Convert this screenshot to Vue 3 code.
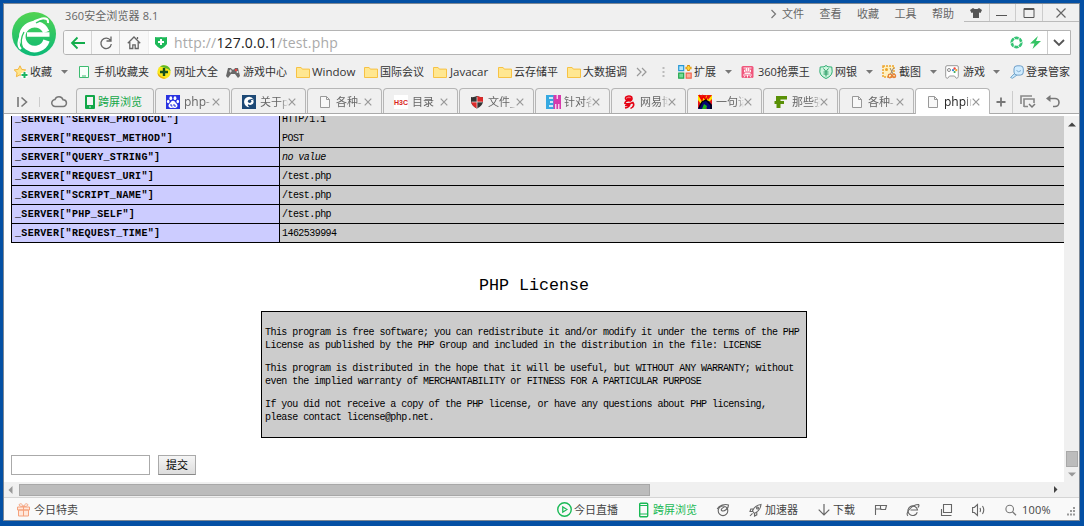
<script setup>
const folder = '<path d="M.5 2.5h4.6l1.2 1.6h7.2v8.4H.5z" fill="#ffe791" stroke="#f7c244"/>'
const page = '<path d="M2.5 1.5h6l3 3v8h-9z" fill="#f8f8f8" stroke="#999"/><path d="M8.5 1.5v3h3" fill="none" stroke="#999"/>'
const eGlyph = '<g fill="none" stroke="#666" stroke-width="1.1"><path d="M11.300 9.300a4.800 4.800 0 1 1 .2-2.300H4.500"/><path d="M2 12.800C-1.500 10.500 6 1.400 12.600 1.500c.8 1 .2 2-.8 3"/></g>'

const icons = {
  star: '<path d="M6 .8l1.7 3.6 4 .5-2.9 2.8.7 4L6 9.8l-3.6 1.9.7-4L.2 4.9l4-.5z" fill="#ffe58a" stroke="#f3b63c"/><path d="M10.5 6.5v7M7 10h7" stroke="#fff" stroke-width="4"/><path d="M10.5 7v6M7.5 10h6" stroke="#1bb464" stroke-width="2"/>',
  phoneBook: '<path d="M1.5 1.5h9v11h-9z" fill="#f7fffa" stroke="#3dbb70"/><path d="M4 11h4" stroke="#3dbb70"/>',
  plusBall: '<circle cx="7" cy="7" r="6.7" fill="#f9e81d"/><path d="M3 1.6A6.7 6.7 0 0 1 13.6 6L11 4 5 2z" fill="#5cb92a"/><path d="M.4 8A6.7 6.7 0 0 0 9 13.3L5 12z" fill="#e9a914"/><path d="M7 3v8M3 7h8" stroke="#14501c" stroke-width="2.4"/>',
  gamepad: '<path d="M2 3h3l1 1.5h2L9 3h3l2 8-2 2-3-4H5l-3 4-2-2z" fill="#686868"/><path d="M3 6h3M4.5 4.5v3" stroke="#ddd"/><circle cx="10" cy="5" r="1.2" fill="#e44"/><circle cx="11.5" cy="7" r="1" fill="#eee"/>',
  folder,
  blocks: '<path d="M.7.7h5v5h-5z" fill="#b5e5fb" stroke="#2799d5" stroke-width="1.2"/><path d="M.7 8.2h5v5h-5z" fill="#72dc97" stroke="#23a64d" stroke-width="1.2"/><path d="M8.2 8.2h5v5h-5z" fill="#fcae9e" stroke="#ef6850" stroke-width="1.2"/><path d="M10.5 0v6M7.5 3h6" stroke="#d98900" stroke-width="2.6"/><path d="M10.5 1v4M8.500 3h4" stroke="#ffd93c" stroke-width="1.300"/>',
  ticket: '<rect x=".5" y="1" width="12" height="12" rx="1.5" fill="#f0567c"/><path d="M2.5 3h8M3.5 5h6v2h-6zM5.5 3v3M7.5 3v3M3.5 8.5h6M2 10h9M6.5 10v2.5M4 11l-1 1.5M9 11l1 1.5" stroke="#fff" stroke-width=".9" fill="none"/>',
  bank: '<path d="M7 .5l2 1.3 3.8.2.4 4.8C13 10.300 9.500 12.500 7 13.500 4.500 12.500 1 10.300.8 6.800L1.200 2 5 1.800z" fill="#cff5df" stroke="#2fae72"/><path d="M4.500 3.500L7 6.500l2.500-3M7 6.500v5M4.500 7h5M4.500 9h5" fill="none" stroke="#269b62"/>',
  shot: '<path d="M1 1h11v11H1z" fill="#fff1bf" stroke="#eda42d" stroke-width="1.500" stroke-dasharray="2 1"/><circle cx="4.500" cy="4.500" r="1.500" fill="#eda42d"/><path d="M8 3l3 6M11.500 3l-3 6" stroke="#97806b"/><circle cx="8" cy="11" r="1.800" fill="none" stroke="#e6803c" stroke-width="1.300"/><circle cx="12" cy="11" r="1.600" fill="none" stroke="#e6803c" stroke-width="1.300"/>',
  games: '<path d="M.7 2q.2-1.300 1.300-1.300h10q1.300 0 1.300 1.300v9.500q-.2 1.800-2 1.800L9.500 11h-5l-1.800 2.300q-2 0-2-1.800z" fill="#fff" stroke="#999"/><circle cx="4" cy="5" r="1.500" fill="none" stroke="#888"/><circle cx="9.600" cy="3.500" r="1.200" fill="#ef4a40"/><circle cx="8" cy="5.200" r="1.100" fill="#3388e0"/><circle cx="11.300" cy="5.200" r="1.100" fill="#efa429"/><circle cx="9.600" cy="7" r="1.100" fill="#3baa59"/>',
  login: '<path d="M5 8l-4.500 4.500 2 .8L7 10" fill="#c6e6fa" stroke="#77a9ce"/><rect x="4" y=".8" width="9.300" height="9.300" rx="3" fill="#d0ecff" stroke="#6f9fc8"/><path d="M6.500 5.500q2 2.500 4.500 0" fill="none" stroke="#7fa9cd"/>',
  tabPhone: '<rect x="2" y="0" width="10" height="14" rx="1" fill="#12a748"/><path d="M4 2h6v8H4z" fill="#f4f4f4"/><path d="M6.200 11.500h1.600v1H6.200z" fill="#fff"/>',
  paw: '<path d="M0 0h14v14H0z" fill="#2932e1"/><g fill="#fff"><ellipse cx="4.800" cy="3.200" rx="1.400" ry="1.900"/><ellipse cx="9" cy="3.200" rx="1.400" ry="1.900"/><ellipse cx="2.200" cy="6.500" rx="1.300" ry="1.700"/><ellipse cx="11.800" cy="6.500" rx="1.300" ry="1.700"/><path d="M7 5.800c2 0 2.300 2.200 4 3.400 1.500 2.300-.5 4.300-4 3.600-3.500.7-5.500-1.300-4-3.600 1.700-1.200 2-3.400 4-3.400z"/></g><path d="M5 9v2h1.500M8 9v2h2" stroke="#2932e1" fill="none"/>',
  swirl: '<path d="M0 0h14v14H0z" fill="#1d4976"/><path d="M12 4.500Q9 .8 5 2.200 1.500 4 2.200 8q1 4 5.300 4.300-2.500-1.300-1.500-3 3 1.500 5-.5 1.200-2 .2-4z" fill="#fff"/><circle cx="7.600" cy="6.300" r="1.700" fill="#1d4976"/><path d="M8 5l5-1.500" stroke="#1d4976"/>',
  page,
  shield: '<path d="M1 2q3 .5 6-1 3 1.500 6 1v5q-1 4-6 6.500Q2 11 1 7z" fill="#333"/><path d="M7 1q3 1.500 6 1v5H7zM1.200 7H7v6.500Q2 11 1.200 7z" fill="#dc2929"/><path d="M1.500 7h11M7 2v11" stroke="#eee" stroke-width=".7"/>',
  em: '<path d="M0 0h8v14H0z" fill="#36a9e1"/><path d="M7.500 0H15v14H7.500z" fill="#d83aac"/><path d="M3 3h4M4 7h3M3 11h4" fill="none" stroke="#fff" stroke-width="1.500"/><path d="M9.800 14V9M11.200 0v4M12.800 14V9" fill="none" stroke="#fff" stroke-width="1.100"/>',
  netease: '<g fill="none" stroke="#e50012" stroke-width="1.500"><path d="M9.500 4.800H4.200q-1.700-1.600.2-3.200 3-1.400 5.200.3 1.300 3-1.200 4.100-4.900-.9-5.500 2.200 3.400 1.500 8-.7 2 2.500-.6 4.700M3 10.500q3 .5 4.700-2M3 13q4.300-.7 5-4M11.500 11.500l-3 2"/><path d="M4.500 3.200h5"/></g>',
  flame: '<path d="M0 0h14v14H0z" fill="#e91616"/><path d="M0 0l4 4V0l3 4 2-4 1 5 4-5v4l-4 4-7 1-3-4z" fill="#ffe500"/><path d="M1 0l3 5 1-4 3 4 2-4" fill="none" stroke="#e00" stroke-width="1.500"/><path d="M0 14l2-5 5-4 4 1 3 4v4H9l-2-4-2 4z" fill="#050572"/><path d="M4 14l2-5 3 2-1 3z" fill="#1fb51f"/><path d="M1 13l3-6 4-2 5 5v4" fill="none" stroke="#000" stroke-width="1.300"/>',
  freebuf: '<path d="M2 1H13v3.500H6.500V6H10v3H6.500v4H2.500V9H.5V6H2z" fill="#599006"/>',
  gift: '<path d="M.5 4h12v3h-12zM1.500 7h10v6h-10z" fill="#ffe8dc" stroke="#f5a27d"/><path d="M6.500 4v9M6.500 3.500C5 0 2 .2 2.200 2.200Q2.800 3.500 6.500 3.500C8 0 11 .2 10.800 2.200Q10.200 3.500 6.500 3.500" fill="none" stroke="#f5a27d"/>',
  play: '<circle cx="7" cy="7" r="6.300" fill="none" stroke="#19b955" stroke-width="1.300"/><path d="M5.400 4.500v5L9.200 7z" fill="none" stroke="#19b955" stroke-width="1.200"/>',
  phone: '<rect x=".7" y=".2" width="8" height="13.500" rx="1" fill="none" stroke="#19b955" stroke-width="1.400"/><path d="M1 2.500h7.500M1 11h7.500" stroke="#19b955"/>',
  orbit: '<g fill="none" stroke="#666" stroke-width="1.100"><circle cx="7" cy="7.800" r="4.800"/><path d="M1.200 6C3 2.500 9 .5 12.500 2 12.500 6 8 9 5.500 7.500 4.500 6 7 4.500 8.500 4"/></g>',
  rocket: '<g fill="none" stroke="#666" stroke-width="1.100"><path d="M3.500 8Q5.500 2.500 12 1.500q-.5 6-6.500 9zM4 6H1.800L1 8.500h2.500M7.800 9.300v2.500L5.500 13v-2.500M1 13l2.500-2.700"/><circle cx="8.500" cy="5" r="1"/></g>',
  down: '<path d="M6 1v11M.7 6.700L6 12l5.300-5.300" fill="none" stroke="#666" stroke-width="1.200"/>',
  flag: '<path d="M1.500 12V2.500h11L11.500 6.500H7V6H1.500M6.500 2.500V6" fill="none" stroke="#666" stroke-width="1.100"/>',
  ie: eGlyph,
  windows: '<path d="M3.500 1.500h8v8h-8zM1.500 6v6.500h10" fill="none" stroke="#666" stroke-width="1.100"/>',
  speaker: '<path d="M.6 4.500h1.700L5.500 1.500v11L2.300 9.500H.6zM8 5q1 2 0 4M10.500 3q2.500 4 0 8" fill="none" stroke="#666" stroke-width="1.100"/>',
  lens: '<circle cx="4.700" cy="6" r="3.800" fill="none" stroke="#777" stroke-width="1.100"/><path d="M7.500 8.800l3.500 3.500" stroke="#777" stroke-width="1.300"/>',
}

// x = left edge of the item, gap = distance from the icon's left edge to its label
const place = (list, end) => list.map((it, i) => ({ ...it, w: (list[i + 1]?.x ?? end) - it.x }))

const bookmarks = place([
  { x: 14, icon: 'star', label: '收藏', gap: 16 },
  { x: 61, caret: true },
  { x: 78, icon: 'phoneBook', label: '手机收藏夹', gap: 16 },
  { x: 157, icon: 'plusBall', label: '网址大全', gap: 17 },
  { x: 226, icon: 'gamepad', label: '游戏中心', gap: 17 },
  { x: 296, icon: 'folder', label: 'Window', gap: 16, latin: true },
  { x: 364, icon: 'folder', label: '国际会议', gap: 16 },
  { x: 433, icon: 'folder', label: 'Javacar', gap: 17, latin: true },
  { x: 498, icon: 'folder', label: '云存储平', gap: 16 },
  { x: 567, icon: 'folder', label: '大数据调', gap: 16 },
  { x: 636, more: true },
  { x: 662, dots: true },
  { x: 678, icon: 'blocks', label: '扩展', gap: 16 },
  { x: 725, caret: true },
  { x: 741, icon: 'ticket', label: '360抢票王', gap: 17 },
  { x: 819, icon: 'bank', label: '网银', gap: 16 },
  { x: 866, caret: true },
  { x: 882, icon: 'shot', label: '截图', gap: 17 },
  { x: 930, caret: true },
  { x: 945, icon: 'games', label: '游戏', gap: 18 },
  { x: 993, caret: true },
  { x: 1010, icon: 'login', label: '登录管家', gap: 16 },
], 1079)

const tabs = [
  { icon: 'paw', label: 'php-', latin: true },
  { icon: 'swirl', label: '关于p' },
  { icon: 'page', label: '各种-' },
  { h3c: true, label: '目录' },
  { icon: 'shield', label: '文件_' },
  { icon: 'em', label: '针对各' },
  { icon: 'netease', label: '网易博' },
  { icon: 'flame', label: '一句话' },
  { icon: 'freebuf', label: '那些强' },
  { icon: 'page', label: '各种-' },
  { icon: 'page', label: 'phpin', latin: true, active: true },
]

const rows = [
  ['SERVER_PROTOCOL', 'HTTP/1.1'],
  ['REQUEST_METHOD', 'POST'],
  ['QUERY_STRING', 'no value'],
  ['REQUEST_URI', '/test.php'],
  ['SCRIPT_NAME', '/test.php'],
  ['PHP_SELF', '/test.php'],
  ['REQUEST_TIME', '1462539994'],
]

const status = place([
  { x: 17, icon: 'gift', label: '今日特卖', gap: 17 },
  { x: 557, icon: 'play', label: '今日直播', gap: 17, wide: true },
  { x: 639, icon: 'phone', label: '跨屏浏览', gap: 14, green: true },
  { x: 716, icon: 'orbit' },
  { x: 749, icon: 'rocket', label: '加速器', gap: 16 },
  { x: 818, icon: 'down', label: '下载', gap: 15 },
  { x: 874, icon: 'flag' },
  { x: 906, icon: 'ie' },
  { x: 940, icon: 'windows' },
  { x: 972, icon: 'speaker' },
  { x: 1005, icon: 'lens', label: '100%', gap: 17, latin: true },
], 1064)
</script>

<template>
  <div class="desktop">
    <div class="window">
      <div class="head">
        <svg class="logo" width="44" height="44" viewBox="0 0 44 44">
          <defs>
            <linearGradient id="lg" x1="0" y1="0" x2="0" y2="1">
              <stop offset="0" stop-color="#51d351" /><stop offset="1" stop-color="#0bb978" />
            </linearGradient>
          </defs>
          <circle cx="22" cy="22" r="22" fill="url(#lg)" />
          <path d="M34.500 28.500A12.400 12.400 0 1 1 34.200 20" fill="none" stroke="#fff" stroke-width="6.500" />
          <path d="M15 22.500H37.500" stroke="#fff" stroke-width="4.500" />
          <path d="M9 37Q3.500 32 10.500 20.500 18 9.500 30 6.500q7-1 6 4.500" fill="none" stroke="#fff" stroke-width="2.200" />
          <path d="M10.500 35.500Q7.500 28 12 20" fill="none" stroke="#29c562" stroke-width="1.300" />
          <path d="M24 11Q28 8.500 32 8.500" fill="none" stroke="#29c562" stroke-width="1.300" />
        </svg>
        <div class="headmain">
          <div class="titlebar">
            <span class="title">360安全浏览器 8.1</span>
            <svg class="chev" width="8" height="12" viewBox="0 0 8 12"><path d="M1.500 2l4 4-4 4" fill="none" stroke="#777" stroke-width="1.200" /></svg>
            <span v-for="m in ['文件', '查看', '收藏', '工具', '帮助']" :key="m" class="menu">{{ m }}</span>
            <div class="winbtns">
              <i><svg width="12" height="12" viewBox="0 0 12 12"><path d="M3 1l1.500 1h3L9 1l3 2-1.500 3L9 5.500V11H3V5.500L1.500 6 0 3z" fill="#555" /></svg></i>
              <i><svg width="12" height="12" viewBox="0 0 12 12"><path d="M0 8.500h11" stroke="#555" /></svg></i>
              <i><svg width="12" height="12" viewBox="0 0 12 12"><path d="M1 1.500h10v9H1zM1 2.500h10" fill="none" stroke="#555" /></svg></i>
              <i><svg width="12" height="12" viewBox="0 0 12 12"><path d="M1.500 1.500l9 9M10.500 1.500l-9 9" stroke="#666" stroke-width="1.200" /></svg></i>
            </div>
          </div>
          <div class="address">
            <i class="nav"><svg width="16" height="14" viewBox="0 0 16 14"><path d="M1.500 7H15M7.500 1.500L2 7l5.500 5.500" fill="none" stroke="#12ad4c" stroke-width="1.800" /></svg></i>
            <i class="nav"><svg width="14" height="14" viewBox="0 0 14 14"><path d="M11.500 4.500A5.200 5.200 0 1 0 12.300 8M12 .5v4.500H7.500" fill="none" stroke="#666" stroke-width="1.300" /></svg></i>
            <i class="nav"><svg width="14" height="14" viewBox="0 0 14 14"><path d="M.8 7.200L7 1l6.200 6.200M2.800 6v6.500h3V8.800h2.400v3.700h3V6M10.500 3V1" fill="none" stroke="#666" stroke-width="1.300" /></svg></i>
            <svg class="safe" width="12" height="13" viewBox="0 0 12 13"><path d="M0 1q3 .6 6 0 3 .6 6 0v7Q10 11 6 13 2 11 0 8z" fill="#20b95a" /><path d="M6 3v6M3 6h6" stroke="#fff" stroke-width="2" /></svg>
            <span class="url">http://<b>127.0.0.1</b>/test.php</span>
            <svg class="aperture" width="13" height="13" viewBox="0 0 13 13"><circle cx="6.500" cy="6.500" r="4.700" fill="none" stroke="#35c374" stroke-width="2.800" /><path d="M3 .5l2.500 3.800M9.500 .8L8.300 5M12.800 5.500L9 7.500M10 12.500L7.500 8.800M3.500 12.300L4.700 8M.3 7.500L4 5.500" stroke="#fff" stroke-width=".9" /></svg>
            <svg class="bolt" width="11" height="13" viewBox="0 0 11 13"><path d="M8 0L0 7.500h4.500L2.500 13 11 5H6z" fill="#35c364" /></svg>
            <i class="drop"><svg width="12" height="8" viewBox="0 0 12 8"><path d="M1 1l5 5 5-5" fill="none" stroke="#555" stroke-width="1.800" /></svg></i>
          </div>
        </div>
      </div>

      <div class="bookmarks">
        <div v-for="b in bookmarks" :key="b.x" class="slot" :style="{ width: b.w + 'px' }">
          <svg v-if="b.caret" width="8" height="14" viewBox="0 0 8 14"><path d="M0 5h7L3.500 8.800z" fill="#777" /></svg>
          <svg v-else-if="b.more" width="12" height="14" viewBox="0 0 12 14"><path d="M1 3l4 4-4 4M6 3l4 4-4 4" fill="none" stroke="#999" stroke-width="1.200" /></svg>
          <svg v-else-if="b.dots" width="3" height="14" viewBox="0 0 3 14"><path d="M1.500 2v11" stroke="#bbb" stroke-width="2" stroke-dasharray="2 2" /></svg>
          <template v-else>
            <span class="ico" :style="{ width: b.gap + 'px' }"><svg width="14" height="14" viewBox="0 0 14 14" v-html="icons[b.icon]"></svg></span>
            <span class="label" :class="{ latin: b.latin }">{{ b.label }}</span>
          </template>
        </div>
      </div>

      <div class="tabs">
        <div class="tools">
          <svg width="12" height="12" viewBox="0 0 12 12"><path d="M1 1v10M4.500 1.500L9.500 6l-5 4.500" fill="none" stroke="#777" stroke-width="1.600" /></svg>
          <span class="sep"></span>
          <svg width="16" height="13" viewBox="0 0 16 13"><path d="M4.500 11.500a3.500 3.500 0 0 1-.5-7 4.200 4.200 0 0 1 8 .3 3.300 3.300 0 0 1 .2 6.700z" fill="none" stroke="#777" stroke-width="1.500" /></svg>
        </div>
        <div class="tab first">
          <svg width="14" height="14" viewBox="0 0 14 14" v-html="icons.tabPhone"></svg>
          <span class="tlabel">跨屏浏览</span>
        </div>
        <div v-for="(t, i) in tabs" :key="i" class="tab" :class="{ active: t.active }">
          <span v-if="t.h3c" class="h3c">H3C</span>
          <svg v-else width="14" height="14" viewBox="0 0 14 14" v-html="icons[t.icon]"></svg>
          <span class="tlabel" :class="{ latin: t.latin }">{{ t.label }}</span>
          <svg class="x" width="8" height="8" viewBox="0 0 8 8"><path d="M.7.7l6.600 6.600M7.300.7L.7 7.300" stroke="#999" stroke-width="1.200" /></svg>
        </div>
        <div class="after">
          <svg width="10" height="10" viewBox="0 0 10 10"><path d="M5 .5v9M.5 5h9" stroke="#777" stroke-width="1.800" /></svg>
          <span class="bar"></span>
          <svg width="16" height="13" viewBox="0 0 16 13"><path d="M1 9V1h11M4 12V4h10v4M4 11.500h4" fill="none" stroke="#888" stroke-width="1.600" /><path d="M9 9l3 3 3-3" fill="none" stroke="#777" stroke-width="1.500" /></svg>
          <svg class="undo" width="14" height="13" viewBox="0 0 14 13"><path d="M2 3.500h7a4 4 0 0 1 0 8H7" fill="none" stroke="#777" stroke-width="1.600" /><path d="M0 3.500L4.500 0v7z" fill="#777" /></svg>
        </div>
      </div>

      <div class="viewport">
        <div class="page">
          <div class="info">
            <div v-for="(r, i) in rows" :key="r[0]" class="row" :class="{ open: i === 0 }">
              <div class="k">_SERVER["{{ r[0] }}"]</div>
              <div class="v" :class="{ none: r[1] === 'no value' }">{{ r[1] }}</div>
            </div>
          </div>
          <h2>PHP License</h2>
          <div class="license">
            <p>This program is free software; you can redistribute it and/or modify it under the terms of the PHP<br>License as published by the PHP Group and included in the distribution in the file: LICENSE</p>
            <p>This program is distributed in the hope that it will be useful, but WITHOUT ANY WARRANTY; without<br>even the implied warranty of MERCHANTABILITY or FITNESS FOR A PARTICULAR PURPOSE</p>
            <p>If you did not receive a copy of the PHP license, or have any questions about PHP licensing,<br>please contact license@php.net.</p>
          </div>
          <div class="form">
            <div class="field"></div>
            <div class="submit">提交</div>
          </div>
        </div>
        <div class="vbar">
          <svg width="8" height="5" viewBox="0 0 8 5"><path d="M0 4.500L4 .5l4 4z" fill="#444" /></svg>
          <div class="vthumb"></div>
          <svg width="8" height="5" viewBox="0 0 8 5"><path d="M0 .5h8l-4 4z" fill="#999" /></svg>
        </div>
      </div>
      <div class="hbar">
        <svg width="5" height="8" viewBox="0 0 5 8"><path d="M4.500 0v8L.5 4z" fill="#999" /></svg>
        <div class="hthumb"></div>
        <svg class="right" width="4" height="7" viewBox="0 0 4 7"><path d="M0 0v7l3.500-3.500z" fill="#444" /></svg>
      </div>
      <div class="status">
        <div v-for="s in status" :key="s.x" class="slot" :style="{ width: s.w + 'px' }">
          <span class="ico" :style="{ width: (s.gap || 14) + 'px' }"><svg :width="s.wide ? 15 : 14" :height="s.wide ? 15 : 14" viewBox="0 0 14 14" v-html="icons[s.icon]"></svg></span>
          <span v-if="s.label" class="label" :class="{ green: s.green, latin: s.latin }">{{ s.label }}</span>
        </div>
        <svg class="grip" width="10" height="10" viewBox="0 0 10 10"><path d="M7 1h2M4 4h2M7 4h2M1 7.500h2M4 7.500h2M7 7.500h2" stroke="#999" stroke-width="2" /></svg>
      </div>
    </div>
  </div>
</template>

<style>
body { margin: 0; background: #0450a4; }
</style>

<style scoped>
* { box-sizing: border-box; }
svg { display: block; flex: none; overflow: visible; }
i { font-style: normal; }
.desktop { width: 1084px; height: 526px; padding: 3px 4px 5px 3px; background: #0450a4; overflow: hidden; }
.window {
  width: 1077px; height: 518px; border: 1px solid #7d8894; background: #f0f0f0;
  display: flex; flex-direction: column; overflow: hidden;
  font: 11px/14px "Open Sans", "Noto Sans CJK SC", sans-serif; color: #333; white-space: nowrap;
}
.head { display: flex; height: 55px; flex: none; }
.logo { margin: 8px 0 0 8px; }
.headmain { margin-left: 7px; flex: 1; min-width: 0; }
.titlebar { height: 26px; display: flex; align-items: flex-start; }
.title { width: 702px; flex: none; padding: 5px 0 0 2px; color: #666; letter-spacing: .1px; }
.chev { margin: 4px 0 0 1px; width: 16px; }
.menu { width: 37.500px; flex: none; padding-top: 3px; color: #666; }
.winbtns { display: flex; flex: none; height: 18px; border-bottom: 1px solid #bbb; margin-left: -6px; width: 116px; }
.winbtns i { flex: none; width: 26.500px; display: flex; align-items: center; justify-content: center; border-right: 1px solid #ccc; }
.winbtns i:first-child { width: 26px; }
.winbtns i:last-child { flex: 1; border: 0; }
.address { height: 25px; width: 1008px; background: #fff; border: 1px solid #b4b4b4; border-radius: 3px 0 0 3px; display: flex; align-items: center; overflow: hidden; }
.nav { width: 28px; height: 23px; background: #f8f8f8; border-right: 1px solid #d4d4d4; display: flex; align-items: center; justify-content: center; }
.nav:nth-child(3) { border-color: #eee; width: 29px; }
.safe { margin-left: 6px; }
.url { margin-left: 7px; width: 836px; font-size: 14px; line-height: 22px; color: #aaa; letter-spacing: .19px; }
.url b { font-weight: 400; color: #222; }
.bolt { margin-left: 7px; }
.drop { margin-left: 6px; flex: 1; height: 23px; border-left: 1px solid #ccc; display: flex; align-items: center; justify-content: center; }
.bookmarks { height: 29px; flex: none; display: flex; align-items: center; padding: 0 0 3px 10px; }
.slot { display: flex; align-items: center; flex: none; }
.ico { flex: none; display: block; }
.label.latin { font-size: 11.500px; }
.tabs { height: 26px; flex: none; display: flex; border-bottom: 1px solid #aaa; }
.tools { width: 72px; display: flex; align-items: center; padding: 2px 0 0 13px; flex: none; }
.sep { width: 1px; height: 10px; background: #ccc; margin: 0 11px 0 10px; }
.tab { width: 75px; height: 25px; margin-right: 1px; border: 1px solid #b6b6b6; border-bottom: 0; border-radius: 4px 4px 0 0; display: flex; align-items: center; padding: 1px 0 0 10px; flex: none; color: #666; }
.tab.first { width: 78px; color: #12a748; padding-left: 6px; }
.tab.first .tlabel { width: 46px; margin-left: 1px; mask-image: none; }
.tlabel { width: 28px; margin-left: 4px; overflow: hidden; mask-image: linear-gradient(90deg, #000 75%, transparent); }
.tlabel.latin { font-size: 12px; }
.x { margin-left: 0; }
.active { background: #fff; height: 26px; color: #222; }
.h3c { width: 14px; height: 14px; background: #fff; color: #d81e20; font: bold 7px/15px "Liberation Sans", sans-serif; display: flex; justify-content: center; }
.after { display: flex; align-items: center; padding: 2px 0 0 5px; }
.bar { width: 1px; height: 22px; background: #ccc; margin: 0 7px 0 6px; }
.undo { margin-left: 10px; }
.viewport { height: 368px; flex: none; display: flex; background: #fff; border-top: 2px solid #fff; }
.page { width: 1060px; padding-left: 7px; overflow: hidden; color: #000; font: 10px/13px "Liberation Mono", monospace; letter-spacing: -.55px; }
.info { margin-top: -6px; border-left: 1px solid #000; }
.row { height: 19px; display: flex; border-bottom: 1px solid #000; line-height: 19px; background: #ccc; }
.row.open { border-color: transparent; background: linear-gradient(90deg, #ccf 267px, #000 267px, #000 268px, #ccc 268px) border-box; }
.k { width: 268px; flex: none; background: #ccf; border-right: 1px solid #000; padding-left: 3px; font-weight: 700; letter-spacing: .32px; }
.v { padding-left: 2px; }
.none { font-style: italic; }
h2 { margin: 32px 0 0 -7px; font-size: 16.700px; line-height: 22px; font-weight: 400; text-align: center; letter-spacing: 0; }
.license { margin: 14px 0 0 250px; width: 546px; height: 127px; border: 1px solid #000; background: #ccc; padding: 14px 0 0 3px; }
.license p { margin: 0 0 10px; }
.form { display: flex; margin-top: 17px; }
.field { width: 139px; height: 20px; border: 1px solid #aaa; background: #fff; }
.submit { margin-left: 8px; width: 38px; height: 20px; border: 1px solid #aaa; border-bottom-color: #888; background: linear-gradient(#f5f5f5, #ddd); font: 11px/17px "Noto Sans CJK SC", sans-serif; text-align: center; letter-spacing: 0; }
.vbar { width: 15px; background: #f0f0f0; display: flex; flex-direction: column; align-items: center; padding-top: 6px; }
.vthumb { width: 12px; height: 16px; margin: 324px 0 5px; background: #bcbcbc; border: 1px solid #a8a8a8; flex: none; }
.hbar { height: 15px; flex: none; display: flex; align-items: center; padding-left: 4px; }
.hthumb { width: 631px; height: 12px; margin-left: 6px; background: #bcbcbc; border: 1px solid #a8a8a8; }
.right { margin-left: 404px; }
.status { flex: 1; background: #f9f9f9; border-top: 1px solid #d5d5d5; display: flex; align-items: center; padding: 1px 0 0 13px; color: #444; }
.status .label.latin { font-size: 11px; letter-spacing: .2px; }
.label.green { color: #19b955; }
.grip { margin: 4px 0 0 2px; }
</style>
